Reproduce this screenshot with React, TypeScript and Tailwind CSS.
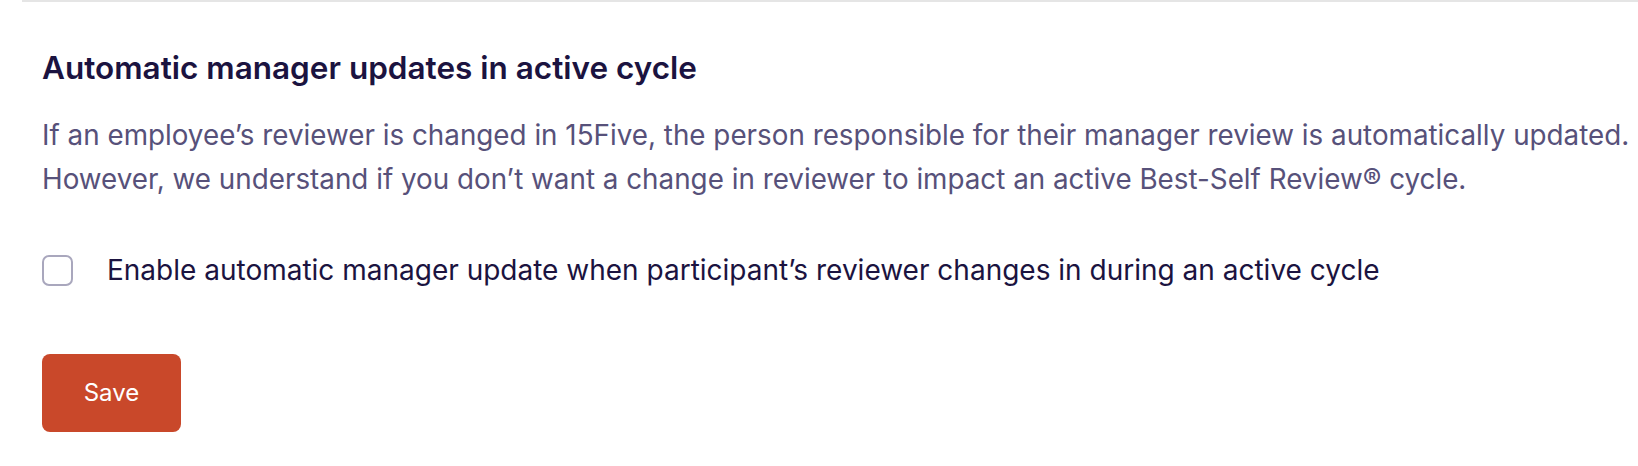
import React from "react";

export default function App() {
  return (
    <div className="w-full min-h-[466px] bg-white" style={{ fontFamily: "Inter, 'Noto Sans', sans-serif" }}>
      <div className="ml-[22px] border-t-2 border-[#e5e5e5]">
        <div className="pl-[20px] pt-[48px]">
          <h2 className="text-[31.5px] leading-[36px] font-semibold text-[#1b1340] whitespace-nowrap">
            Automatic manager updates in active cycle
          </h2>
          <div className="mt-[27px] text-[27.8px] leading-[44px] text-[#57517a] whitespace-nowrap">
            <p>If an employee’s reviewer is changed in 15Five, the person responsible for their manager review is automatically updated.</p>
            <p>However, we understand if you don’t want a change in reviewer to impact an active Best-Self Review® cycle.</p>
          </div>
          <label className="mt-[53px] flex items-center gap-[34px] cursor-pointer">
            <span className="w-[31px] h-[31px] rounded-[7px] border-2 border-[#a9a7bd] bg-white shrink-0" />
            <span className="text-[28px] leading-[32px] text-[#1b1340] whitespace-nowrap">
              Enable automatic manager update when participant’s reviewer changes in during an active cycle
            </span>
          </label>
          <button className="mt-[68px] w-[139px] h-[78px] rounded-[8px] bg-[#c9482a] text-white text-[24px] flex items-center justify-center">
            Save
          </button>
        </div>
      </div>
    </div>
  );
}
